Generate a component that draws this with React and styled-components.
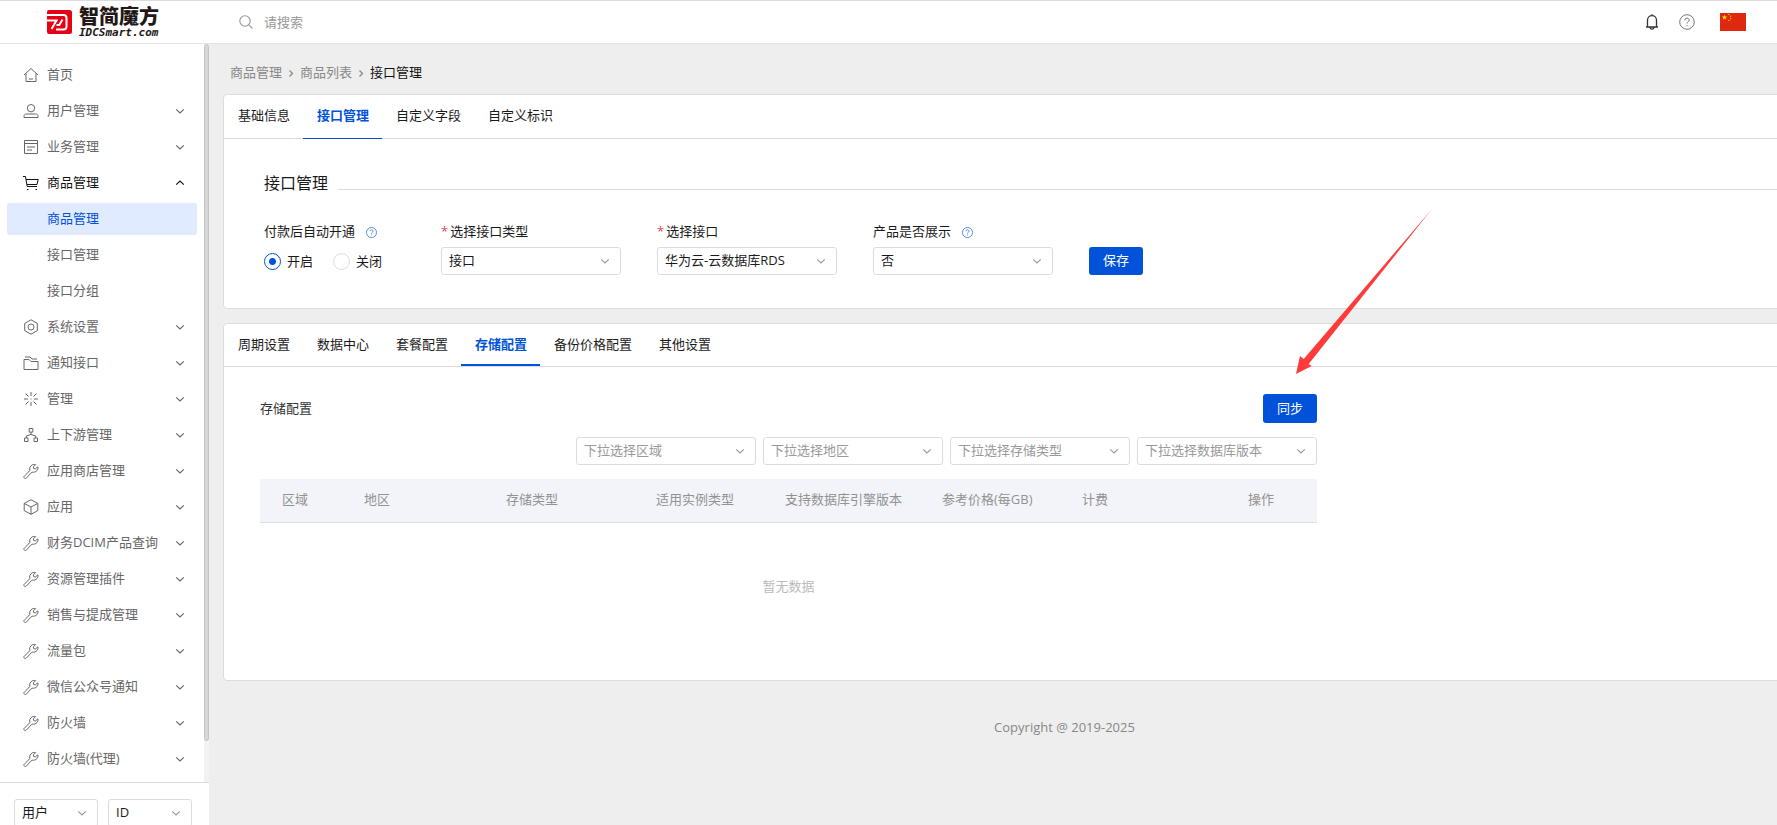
import { useState } from 'react';
import styled, { createGlobalStyle, css } from 'styled-components';

const GlobalStyle = createGlobalStyle`
  * {
    box-sizing: border-box;
  }

  body {
    margin: 0;
    font-family: 'Open Sans', 'Noto Sans CJK SC', sans-serif;
    font-size: 13px;
    line-height: 20px;
    color: #1a1a1a;
    background: #eee;
  }

  button,
  input,
  select {
    font: inherit;
    color: inherit;
  }
`;

const Page = styled.div`
  display: flex;
  flex-direction: column;
  height: 100vh;
  overflow: hidden;
`;

const Header = styled.header`
  display: flex;
  align-items: center;
  flex: none;
  height: 44px;
  padding-right: 31px;
  background: #fff;
  border-top: 1px solid #ddd;
  border-bottom: 1px solid #e4e4e4;
`;

const Logo = styled.a`
  display: flex;
  align-items: center;
  gap: 7px;
  width: 209px;
  padding-left: 47px;
  color: #231815;
  text-decoration: none;
`;

const LogoText = styled.span`
  display: flex;
  flex-direction: column;
`;

const LogoName = styled.strong`
  font-size: 20px;
  font-weight: 900;
  line-height: 20px;
`;

const LogoDomain = styled.em`
  font: italic bold 11px/11px 'DejaVu Sans Mono', monospace;
`;

const Search = styled.label`
  display: flex;
  align-items: center;
  flex: 1;
  gap: 11px;
  padding-left: 30px;
  color: #999;
`;

const SearchInput = styled.input`
  width: 200px;
  padding: 0;
  border: none;
  outline: none;
  background: none;

  &::placeholder {
    color: #999;
    opacity: 1;
  }
`;

const HeaderActions = styled.div`
  display: flex;
  align-items: center;
  gap: 20px;
`;

const IconButton = styled.button`
  display: flex;
  padding: 0;
  border: none;
  background: none;
  color: ${({ $muted }) => ($muted ? '#777' : '#333')};
  cursor: pointer;
`;

const FlagButton = styled(IconButton)`
  margin-left: 5px;
`;

const Body = styled.div`
  display: flex;
  flex: 1;
  min-height: 0;
`;

const Sidebar = styled.aside`
  display: flex;
  flex-direction: column;
  flex: none;
  width: 209px;
  background: #fff;
`;

const MenuArea = styled.div`
  display: flex;
  flex: 1;
  min-height: 0;
`;

const Menu = styled.nav`
  display: flex;
  flex-direction: column;
  flex: 1;
  gap: 4px;
  padding: 15px 7px 0;
  overflow: hidden;
`;

const MenuItem = styled.a`
  display: flex;
  align-items: center;
  flex: none;
  gap: 8px;
  height: 32px;
  padding: 0 12px 0 16px;
  border-radius: 3px;
  color: #666;
  text-decoration: none;

  ${({ $open }) => $open && css`
    color: #111;
  `}

  ${({ $sub }) => $sub && css`
    padding-left: 40px;
  `}

  ${({ $active }) => $active && css`
    color: #0052d9;
    background: #e0ebff;
  `}
`;

const MenuLabel = styled.span`
  flex: 1;
  padding-bottom: 2px;
  white-space: nowrap;
`;

const ScrollTrack = styled.div`
  width: 5px;
  background: #f2f2f2;
`;

const ScrollThumb = styled.div`
  height: calc(100% - 41px);
  border: 1px solid #c4c4c4;
  border-radius: 3px;
  background: #d6d6d6;
`;

const SidebarFooter = styled.div`
  display: flex;
  flex: none;
  gap: 10px;
  height: 43px;
  padding: 16px 16px 0 14px;
  border-top: 1px solid #ddd;
  overflow: hidden;
`;

const Main = styled.main`
  flex: 1;
  min-width: 0;
  overflow: hidden;
`;

const Content = styled.div`
  display: flex;
  flex-direction: column;
  gap: 14px;
  margin-right: -143px;
  padding: 18px 14px 0;
`;

const Breadcrumb = styled.nav`
  display: flex;
  align-items: center;
  gap: 4px;
  padding-left: 7px;
  margin-bottom: -2px;
  color: #888;
`;

const Crumb = styled.a`
  color: ${({ $current }) => ($current ? '#111' : '#888')};
  text-decoration: none;
`;

const Panel = styled.section`
  background: #fff;
  border: 1px solid #dcdcdc;
  border-radius: 4px;
`;

const TabList = styled.div`
  display: flex;
  border-bottom: 1px solid #dcdcdc;
`;

const Tab = styled.button`
  height: 44px;
  margin-bottom: -1px;
  padding: 0 13px 3px 14px;
  border: none;
  border-bottom: 1px solid transparent;
  background: none;
  cursor: pointer;

  ${({ $compact }) => $compact && css`
    height: 42px;
    margin-bottom: 0;
    padding-bottom: 0;
    border-bottom-width: 2px;
  `}

  ${({ $active }) => $active && css`
    color: #0052d9;
    font-weight: bold;
    border-bottom-color: #0052d9;
  `}
`;

const SettingsBody = styled.div`
  padding: 32px 0 33px 40px;
`;

const SectionTitle = styled.h2`
  display: flex;
  align-items: center;
  gap: 10px;
  margin: 0 0 26px;
  font-size: 16px;
  font-weight: normal;
  line-height: 24px;

  &::after {
    content: '';
    flex: 1;
    margin-top: 13px;
    border-top: 1px solid #dcdcdc;
  }
`;

const Form = styled.form`
  display: flex;
  align-items: flex-end;
  gap: 36px;
`;

const Field = styled.div`
  display: flex;
  flex-direction: column;
  gap: 6px;
  width: ${({ $narrow }) => ($narrow ? 141 : 180)}px;
`;

const FieldLabel = styled.label`
  display: flex;
  align-items: center;
  gap: 2px;
  height: 20px;
`;

const Required = styled.span`
  color: #e34d59;
`;

const HelpMark = styled.span`
  display: flex;
  margin-left: 9px;
  padding-top: 2px;
  color: #4080e8;
`;

const RadioGroup = styled.div`
  display: flex;
  gap: 20px;
  height: 28px;
`;

const RadioLabel = styled.label`
  display: flex;
  align-items: center;
  gap: 6px;
`;

const Radio = styled.input.attrs({ type: 'radio' })`
  appearance: none;
  width: 17px;
  height: 17px;
  margin: 0;
  border: 1px solid #dcdcdc;
  border-radius: 50%;

  &:checked {
    border-color: #0052d9;
    background: radial-gradient(circle, #0052d9 0 3px, #fff 4px);
  }
`;

const SelectBox = styled.div`
  position: relative;
  flex: none;
  width: ${({ $small }) => ($small ? 84 : 180)}px;
  height: 28px;

  svg {
    position: absolute;
    top: 9px;
    right: 11px;
    pointer-events: none;
    color: #999;
  }
`;

const NativeSelect = styled.select`
  appearance: none;
  width: 100%;
  height: 100%;
  padding: 0 28px 2px 7px;
  border: 1px solid #dcdcdc;
  border-radius: 3px;
  background: #fff;
  color: ${({ $placeholder }) => ($placeholder ? '#999' : '#1a1a1a')};
`;

const PrimaryButton = styled.button`
  height: ${({ $tall }) => ($tall ? 29 : 28)}px;
  padding: 0 14px 2px;
  border: none;
  border-radius: 3px;
  background: #0052d9;
  color: #fff;
  cursor: pointer;
`;

const StorageBody = styled.div`
  display: flex;
  flex-direction: column;
  gap: 14px;
  max-width: 1093px;
  padding: 27px 0 29px 36px;
`;

const StorageHeader = styled.div`
  display: flex;
  align-items: center;
  justify-content: space-between;
`;

const StorageTitle = styled.h3`
  margin: 0;
  padding-bottom: 2px;
  font-size: 13px;
  font-weight: normal;
  color: #333;
`;

const SyncAction = styled.div`
  position: relative;
  display: flex;
`;

const Pointer = styled.svg`
  position: absolute;
  left: 33px;
  bottom: calc(100% + 20px);
  pointer-events: none;
`;

const Filters = styled.div`
  display: flex;
  justify-content: flex-end;
  gap: 7px;
`;

const Table = styled.table`
  width: 100%;
  border-collapse: collapse;
  table-layout: fixed;

  th {
    height: 43px;
    padding: 0 0 2px 22px;
    border-bottom: 1px solid #dcdcdc;
    background: #f3f4f9;
    color: #929292;
    font-weight: normal;
    text-align: left;
    white-space: nowrap;
  }

  td {
    height: 129px;
    padding: 0 0 2px;
    color: #bbb;
    text-align: center;
  }
`;

const Footer = styled.footer`
  padding-top: 22px;
  color: #888;
  text-align: center;
`;

const ICON_PATHS = {
  home: 'M1 8 8 1.5 15 8M3 6.5v8h10v-8M6 12h4',
  user: 'M8 1.5a3.7 3.7 0 1 1 0 7.4a3.7 3.7 0 0 1 0-7.4M1 14.5v-1.3c0-1.4 1-2.2 2.4-2.2h9.2c1.4 0 2.4.8 2.4 2.2v1.3z',
  list: 'M1.5 1.5h13v13h-13zM1.5 4.5h13M4 8h8M4 11h5',
  cart: 'M0 1.500h2.500l1.700 10H14M3 4.500h12.200L14 9.500H4M4 14.500h1.500M12.500 14.500H14',
  gear: 'M8 .8 14.300 4.400v7.200L8 15.200 1.700 11.600V4.400zM8 5a3 3 0 1 1 0 6a3 3 0 0 1 0-6',
  folder: 'M1 14.500v-10h5l2 2h7v8zM2 2h5l2 2h5',
  burst: 'M8 1v4M8 11v4M1 8h4M11 8h4M2.500 2.500l3 3M13.500 2.500l-3 3M2.500 13.500l3-3M13.500 13.500l-3-3M7.500 8h1',
  tree: 'M6.200 1.500h3.600v3.600H6.200zM1.500 11h3.500v3.500H1.500zM11 11h3.500v3.500H11zM8 5v3M3.300 11V9L8 7.500 12.700 9v2',
  wrench: 'M1 13.600 6.800 7.600C6.200 5.300 7.100 3 9.200 1.900c1.200-.6 2.300-.6 3.400-.3L10.300 4l.4 1.600 1.600.4 2.600-2.200c.3 1.400 0 2.800-1 3.900-1.200 1.300-3 1.800-4.900 1.400L3.200 15.200c-1.100.8-3-.4-2.200-1.600z',
  cube: 'M8 .8 14.800 4.400v7.200L8 15.300 1.200 11.600V4.400zM1.200 4.400 8 8l6.800-3.600M8 8v7.300',
};

const menu = [
  { icon: 'home', label: '首页', leaf: true },
  { icon: 'user', label: '用户管理' },
  { icon: 'list', label: '业务管理' },
  {
    icon: 'cart',
    label: '商品管理',
    children: ['商品管理', '接口管理', '接口分组'],
  },
  { icon: 'gear', label: '系统设置' },
  { icon: 'folder', label: '通知接口' },
  { icon: 'burst', label: '管理' },
  { icon: 'tree', label: '上下游管理' },
  { icon: 'wrench', label: '应用商店管理' },
  { icon: 'cube', label: '应用' },
  { icon: 'wrench', label: '财务DCIM产品查询' },
  { icon: 'wrench', label: '资源管理插件' },
  { icon: 'wrench', label: '销售与提成管理' },
  { icon: 'wrench', label: '流量包' },
  { icon: 'wrench', label: '微信公众号通知' },
  { icon: 'wrench', label: '防火墙' },
  { icon: 'wrench', label: '防火墙(代理)' },
];

const columns = [
  { label: '区域', width: 82 },
  { label: '地区', width: 142 },
  { label: '存储类型', width: 150 },
  { label: '适用实例类型', width: 129 },
  { label: '支持数据库引擎版本', width: 157 },
  { label: '参考价格(每GB)', width: 140 },
  { label: '计费', width: 166 },
  { label: '操作', width: 91 },
];

const productTabs = ['基础信息', '接口管理', '自定义字段', '自定义标识'];
const configTabs = ['周期设置', '数据中心', '套餐配置', '存储配置', '备份价格配置', '其他设置'];
const filters = ['下拉选择区域', '下拉选择地区', '下拉选择存储类型', '下拉选择数据库版本'];

const MenuIcon = ({ name }) => (
  <svg width="16" height="16" viewBox="0 0 16 16" fill="none" stroke="currentColor" strokeWidth="1">
    <path d={ICON_PATHS[name]} />
  </svg>
);

const Chevron = ({ up }) => (
  <svg width="10" height="10" viewBox="0 0 10 10" fill="none" stroke="currentColor" strokeWidth="1.100">
    <path d={up ? 'M1.200 6.700l3.800-3.700 3.800 3.700' : 'M1.200 3.300l3.800 3.700 3.800-3.700'} />
  </svg>
);

const CrumbArrow = () => (
  <svg width="10" height="10" viewBox="0 0 10 10" fill="none" stroke="currentColor" strokeWidth="1.300">
    <path d="M3.500 3.500l3 3-3 3" />
  </svg>
);

const HelpIcon = ({ size }) => (
  <svg width={size} height={size} viewBox="0 0 16 16" fill="none" stroke="currentColor" strokeWidth={size > 12 ? 1 : 1.3}>
    <circle cx="8" cy="8" r="7.300" />
    <path d="M5.800 6.300c0-3 4.400-2.800 4.400-.2 0 1.600-2.200 1.500-2.200 3.400M8 11v1.200" />
  </svg>
);

const LogoMark = () => (
  <svg width="25" height="24" viewBox="0 0 25 24">
    <path fill="#e60013" d="M2 0h20.500A2.500 2.500 0 0 1 25 2.500v19a2.500 2.500 0 0 1-2.500 2.500H2a2 2 0 0 1-2-2V2a2 2 0 0 1 2-2z" />
    <path fill="none" stroke="#fff" strokeWidth="2" d="M0 5h16.500a3 3 0 0 1 3 3v8.500a3 3 0 0 1-3 3H9" />
    <path fill="none" stroke="#fff" strokeWidth="2" d="M0 10.500h9.500L4.500 19M15.500 9.500 12.300 15H9.500" />
  </svg>
);

const Flag = () => (
  <svg width="26" height="18" viewBox="0 0 26 18">
    <path fill="#de2910" d="M0 0h26v18H0z" />
    <path fill="#ffde00" d="M4.500 1.700l.7 1.900h2L5.600 4.800l.6 2-1.700-1.200-1.700 1.200.6-2-1.600-1.200h2zM8.300 1h1.200v1H8.300zM10 2.800h1.200v1H10zM10 5.200h1.200v1H10zM8.300 7h1.200v1H8.300z" />
  </svg>
);

const Select = ({ id, label, options, small, placeholder }) => (
  <SelectBox $small={small}>
    <NativeSelect id={id} aria-label={label} $placeholder={placeholder}>
      {options.map((option) => (
        <option key={option}>{option}</option>
      ))}
    </NativeSelect>
    <Chevron />
  </SelectBox>
);

const Tabs = ({ items, initial, compact }) => {
  const [active, setActive] = useState(initial);

  return (
    <TabList role="tablist">
      {items.map((item) => (
        <Tab
          key={item}
          type="button"
          role="tab"
          aria-selected={item === active}
          $active={item === active}
          $compact={compact}
          onClick={() => setActive(item)}
        >
          {item}
        </Tab>
      ))}
    </TabList>
  );
};

const SideMenu = () => (
  <Menu>
    {menu.map((item) => [
      <MenuItem key={item.label} href="#" $open={Boolean(item.children)}>
        <MenuIcon name={item.icon} />
        <MenuLabel>{item.label}</MenuLabel>
        {!item.leaf && <Chevron up={Boolean(item.children)} />}
      </MenuItem>,
      ...(item.children || []).map((child, i) => (
        <MenuItem key={`${item.label}-${child}`} href="#" $sub $active={i === 0}>
          <MenuLabel>{child}</MenuLabel>
        </MenuItem>
      )),
    ])}
  </Menu>
);

const InterfaceForm = () => {
  const [autoOpen, setAutoOpen] = useState('on');

  return (
    <Form onSubmit={(e) => e.preventDefault()}>
      <Field $narrow>
        <FieldLabel as="span" id="auto-open">
          付款后自动开通
          <HelpMark><HelpIcon size={11} /></HelpMark>
        </FieldLabel>
        <RadioGroup role="radiogroup" aria-labelledby="auto-open">
          <RadioLabel>
            <Radio name="auto" checked={autoOpen === 'on'} onChange={() => setAutoOpen('on')} />
            开启
          </RadioLabel>
          <RadioLabel>
            <Radio name="auto" checked={autoOpen === 'off'} onChange={() => setAutoOpen('off')} />
            关闭
          </RadioLabel>
        </RadioGroup>
      </Field>
      <Field>
        <FieldLabel htmlFor="type"><Required>*</Required>选择接口类型</FieldLabel>
        <Select id="type" options={['接口']} />
      </Field>
      <Field>
        <FieldLabel htmlFor="interface"><Required>*</Required>选择接口</FieldLabel>
        <Select id="interface" options={['华为云-云数据库RDS']} />
      </Field>
      <Field>
        <FieldLabel htmlFor="visible">
          产品是否展示
          <HelpMark><HelpIcon size={11} /></HelpMark>
        </FieldLabel>
        <Select id="visible" options={['否']} />
      </Field>
      <PrimaryButton type="submit">保存</PrimaryButton>
    </Form>
  );
};

const StorageConfig = () => (
  <StorageBody>
    <StorageHeader>
      <StorageTitle>存储配置</StorageTitle>
      <SyncAction>
        <PrimaryButton type="button" $tall>同步</PrimaryButton>
        <Pointer width="136" height="165" viewBox="0 0 136 165">
          <path fill="#ff3a3a" d="M0 165 4 147l3.700 3L136 0 12.700 155l3 2z" />
        </Pointer>
      </SyncAction>
    </StorageHeader>
    <Filters>
      {filters.map((name) => (
        <Select key={name} label={name} options={[name]} placeholder />
      ))}
    </Filters>
    <Table>
      <colgroup>
        {columns.map((col) => (
          <col key={col.label} width={col.width} />
        ))}
      </colgroup>
      <thead>
        <tr>
          {columns.map((col) => (
            <th key={col.label} scope="col">{col.label}</th>
          ))}
        </tr>
      </thead>
      <tbody>
        <tr>
          <td colSpan={columns.length}>暂无数据</td>
        </tr>
      </tbody>
    </Table>
  </StorageBody>
);

export default function App() {
  return (
    <Page>
      <GlobalStyle />
      <Header>
        <Logo href="#">
          <LogoMark />
          <LogoText>
            <LogoName>智简魔方</LogoName>
            <LogoDomain>IDCSmart.com</LogoDomain>
          </LogoText>
        </Logo>
        <Search>
          <svg width="14" height="14" viewBox="0 0 14 14" fill="none" stroke="currentColor" strokeWidth="1.100">
            <circle cx="6" cy="6" r="5.200" />
            <path d="M9.800 9.800l3.700 3.700" />
          </svg>
          <SearchInput type="text" aria-label="请搜索" placeholder="请搜索" />
        </Search>
        <HeaderActions>
          <IconButton type="button" aria-label="通知">
            <svg width="14" height="16" viewBox="0 0 14 16" fill="none" stroke="currentColor" strokeWidth="1.300">
              <path d="M1 13h12M2.500 13V6.300C2.500 3.600 4.500 1.700 7 1.700s4.500 1.900 4.500 4.600V13M7 .3v1.400M5 13.500c.2 2.200 3.800 2.200 4 0" />
            </svg>
          </IconButton>
          <IconButton type="button" aria-label="帮助" $muted>
            <HelpIcon size={16} />
          </IconButton>
          <FlagButton type="button" aria-label="语言">
            <Flag />
          </FlagButton>
        </HeaderActions>
      </Header>
      <Body>
        <Sidebar>
          <MenuArea>
            <SideMenu />
            <ScrollTrack>
              <ScrollThumb />
            </ScrollTrack>
          </MenuArea>
          <SidebarFooter>
            <Select small label="搜索范围" options={['用户']} />
            <Select small label="搜索字段" options={['ID']} />
          </SidebarFooter>
        </Sidebar>
        <Main>
          <Content>
            <Breadcrumb>
              <Crumb href="#">商品管理</Crumb>
              <CrumbArrow />
              <Crumb href="#">商品列表</Crumb>
              <CrumbArrow />
              <Crumb as="span" $current>接口管理</Crumb>
            </Breadcrumb>
            <Panel>
              <Tabs items={productTabs} initial="接口管理" />
              <SettingsBody>
                <SectionTitle>接口管理</SectionTitle>
                <InterfaceForm />
              </SettingsBody>
            </Panel>
            <Panel>
              <Tabs items={configTabs} initial="存储配置" compact />
              <StorageConfig />
            </Panel>
            <Footer>Copyright @ 2019-2025</Footer>
          </Content>
        </Main>
      </Body>
    </Page>
  );
}
